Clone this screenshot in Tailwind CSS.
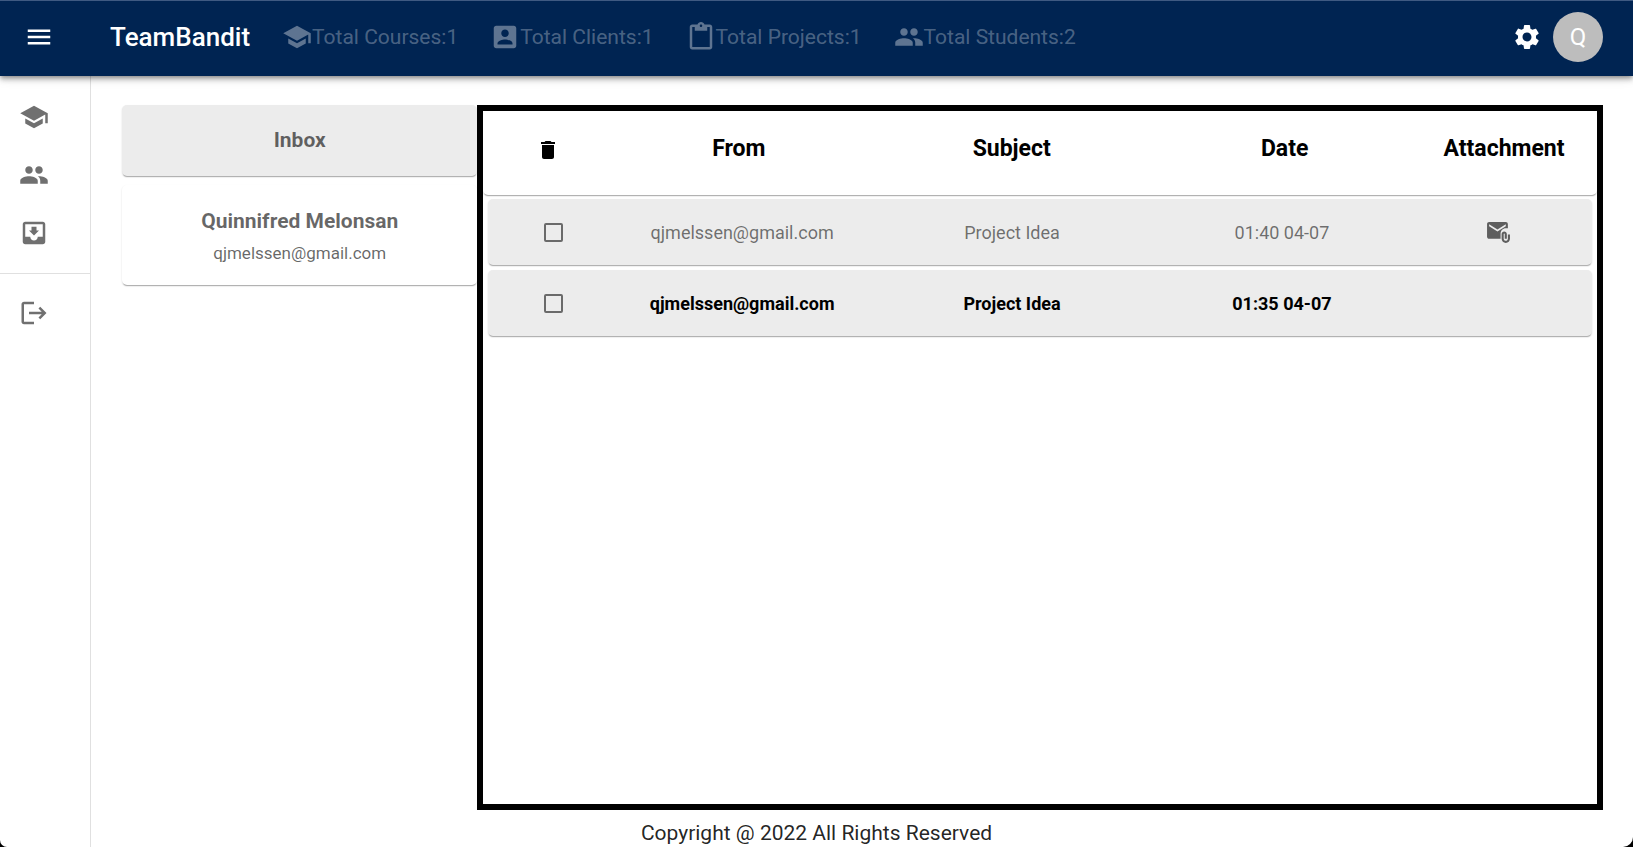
<!DOCTYPE html>
<html lang="en" class="bg-black">
<head>
<meta charset="utf-8">
<meta name="viewport" content="width=device-width, initial-scale=1">
<title>TeamBandit</title>
<script src="https://cdn.jsdelivr.net/npm/@tailwindcss/browser@4"></script>
</head>
<body class="flex min-h-screen flex-col overflow-hidden rounded-br-[10px] rounded-bl-[7px] bg-white font-['Roboto',sans-serif] text-black/87">
<svg class="hidden" aria-hidden="true">
  <symbol id="school" viewBox="0 0 24 24"><path d="M5 13.18v4L12 21l7-3.82v-4L12 17l-7-3.82zM12 3 1 9l11 6 9-4.91V17h2V9L12 3z"/></symbol>
  <symbol id="people" viewBox="0 0 24 24"><path d="M16 11c1.66 0 2.99-1.34 2.99-3S17.66 5 16 5c-1.66 0-3 1.34-3 3s1.34 3 3 3zm-8 0c1.66 0 2.99-1.34 2.99-3S9.66 5 8 5C6.34 5 5 6.34 5 8s1.34 3 3 3zm0 2c-2.33 0-7 1.17-7 3.5V19h14v-2.5c0-2.33-4.67-3.5-7-3.5zm8 0c-.29 0-.62.02-.97.05 1.16.84 1.97 1.97 1.97 3.45V19h6v-2.5c0-2.33-4.67-3.5-7-3.5z"/></symbol>
</svg>

<header class="relative z-10 flex h-[76px] shrink-0 items-center border-t border-[#3f5a82] bg-[#002452] pr-[30px] pb-[3px] pl-[24px] text-white shadow-[0_2px_4px_-1px_rgba(0,0,0,0.3),0_4px_5px_0_rgba(0,0,0,0.18),0_1px_12px_0_rgba(0,0,0,0.14)]">
  <button type="button" aria-label="Open menu" class="mr-[56px]">
    <svg class="size-[30px] fill-current" viewBox="0 0 24 24"><path d="M3 18h18v-2H3v2zm0-5h18v-2H3v2zm0-7v2h18V6H3z"/></svg>
  </button>
  <h1 class="mr-[32px] text-[26px] leading-8 font-medium">TeamBandit</h1>
  <ul class="flex items-center gap-[32px] text-[21px] leading-8 whitespace-nowrap text-white/30">
    <li class="flex items-center"><svg class="size-[30px] fill-white/37"><use href="#school"/></svg>Total Courses:1</li>
    <li class="flex items-center"><svg class="size-[30px] fill-white/37" viewBox="0 0 24 24"><path d="M3 5v14c0 1.1.89 2 2 2h14c1.1 0 2-.9 2-2V5c0-1.1-.9-2-2-2H5c-1.11 0-2 .9-2 2zm12 4c0 1.66-1.34 3-3 3s-3-1.34-3-3 1.34-3 3-3 3 1.34 3 3zm-9 8c0-2 4-3.1 6-3.1s6 1.1 6 3.1v1H6v-1z"/></svg>Total Clients:1</li>
    <li class="flex items-center"><svg class="size-[30px] fill-white/37" viewBox="0 0 24 24"><path d="M19 2h-4.18C14.4.84 13.3 0 12 0c-1.3 0-2.4.84-2.82 2H5c-1.1 0-2 .9-2 2v16c0 1.1.9 2 2 2h14c1.1 0 2-.9 2-2V4c0-1.1-.9-2-2-2zm-7 0c.55 0 1 .45 1 1s-.45 1-1 1-1-.45-1-1 .45-1 1-1zm7 18H5V4h2v3h10V4h2v16z"/></svg>Total Projects:1</li>
    <li class="flex items-center"><svg class="size-[30px] fill-white/37"><use href="#people"/></svg>Total Students:2</li>
  </ul>
  <button type="button" aria-label="Settings" class="mr-[11px] ml-auto">
    <svg class="size-[30px] fill-current" viewBox="0 0 24 24"><path d="M19.14 12.94c.04-.3.06-.61.06-.94 0-.32-.02-.64-.07-.94l2.03-1.58c.18-.14.23-.41.12-.61l-1.92-3.32c-.12-.22-.37-.29-.59-.22l-2.39.96c-.5-.38-1.03-.7-1.62-.94l-.36-2.54c-.04-.24-.24-.41-.48-.41h-3.84c-.24 0-.43.17-.47.41l-.36 2.54c-.59.24-1.13.57-1.62.94l-2.39-.96c-.22-.08-.47 0-.59.22L2.74 8.87c-.12.21-.08.47.12.61l2.03 1.58c-.05.3-.09.63-.09.94s.02.64.07.94l-2.03 1.58c-.18.14-.23.41-.12.61l1.92 3.32c.12.22.37.29.59.22l2.39-.96c.5.38 1.03.7 1.62.94l.36 2.54c.05.24.24.41.48.41h3.84c.24 0 .44-.17.47-.41l.36-2.54c.59-.24 1.13-.56 1.62-.94l2.39.96c.22.08.47 0 .59-.22l1.92-3.32c.12-.22.07-.47-.12-.61l-2.01-1.58zM12 15.6c-1.98 0-3.6-1.62-3.6-3.6s1.62-3.6 3.6-3.6 3.6 1.62 3.6 3.6-1.62 3.6-3.6 3.6z"/></svg>
  </button>
  <button type="button" aria-label="Account" class="size-[50px] rounded-full bg-[#bdbdbd] text-[24px]">Q</button>
</header>

<div class="flex grow">
  <nav aria-label="Main" class="w-[91px] shrink-0 border-r border-[#e0e0e0] text-[#707070]">
    <ul class="flex flex-col gap-[28px] border-b border-[#e0e0e0] pt-[26px] pb-[25px] pl-[19px]">
      <li><a href="#courses" aria-label="Courses" class="block size-[30px]"><svg class="size-[30px] fill-current"><use href="#school"/></svg></a></li>
      <li><a href="#students" aria-label="Students" class="block size-[30px]"><svg class="size-[30px] fill-current"><use href="#people"/></svg></a></li>
      <li><a href="#inbox" aria-label="Inbox" class="block size-[30px]"><svg class="size-[30px] fill-current" viewBox="0 0 24 24"><path d="M19 3H4.99c-1.11 0-1.98.9-1.98 2L3 19c0 1.1.88 2 1.99 2H19c1.1 0 2-.9 2-2V5c0-1.1-.9-2-2-2zm0 12h-4c0 1.66-1.35 3-3 3s-3-1.34-3-3H4.99V5H19v10zm-3-5h-2V7h-4v3H8l4 4 4-4z"/></svg></a></li>
    </ul>
    <a href="#logout" aria-label="Log out" class="mt-[24px] ml-[19px] block size-[30px]"><svg class="size-[30px] fill-current" viewBox="0 0 24 24"><path d="m17 7-1.41 1.41L18.17 11H8v2h10.17l-2.58 2.58L17 17l5-5zM4 5h8V3H4c-1.1 0-2 .9-2 2v14c0 1.1.9 2 2 2h8v-2H4V5z"/></svg></a>
  </nav>

  <div class="flex grow flex-col pt-[29px]">
    <main class="flex grow pr-[30px] pl-[31px]">
      <div class="flex w-[24%] shrink-0 flex-col gap-[9px] text-center text-black/60">
        <button type="button" class="h-[71px] rounded-[5px] bg-[#ececec] text-[21px] font-bold shadow-[0_2px_1px_-1px_rgba(0,0,0,0.25),0_1px_2px_0_rgba(0,0,0,0.14)]">Inbox</button>
        <section class="h-[100px] rounded-[5px] pt-[22px] shadow-[0_2px_1px_-1px_rgba(0,0,0,0.25),0_1px_2px_0_rgba(0,0,0,0.14)]">
          <h2 class="text-[21px] leading-7 font-bold">Quinnifred Melonsan</h2>
          <p class="pt-1 text-[17px] leading-7">qjmelssen@gmail.com</p>
        </section>
      </div>

      <div class="grow border-6 border-black">
        <table class="block text-center">
          <thead class="block">
            <tr class="grid h-[84px] grid-cols-[109fr_273fr_273fr_273fr_166fr] items-center rounded-[5px] px-[10px] pb-[7px] text-[23px] text-black shadow-[0_2px_1px_-1px_rgba(0,0,0,0.25),0_1px_2px_0_rgba(0,0,0,0.14)]">
              <th scope="col"><button type="button" aria-label="Delete selected" class="mx-auto block"><svg class="size-[24px] fill-current" viewBox="0 0 24 24"><path d="M6 19c0 1.1.9 2 2 2h8c1.1 0 2-.9 2-2V7H6v12zM19 4h-3.5l-1-1h-5l-1 1H5v2h14V4z"/></svg></button></th>
              <th scope="col">From</th>
              <th scope="col">Subject</th>
              <th scope="col">Date</th>
              <th scope="col">Attachment</th>
            </tr>
          </thead>
          <tbody class="flex flex-col gap-[5px] px-[5px] pt-[4px] text-[18px]">
            <tr class="grid h-[66px] grid-cols-[109fr_273fr_273fr_273fr_166fr] items-center rounded-[5px] bg-[#ececec] px-[11px] text-black/55 shadow-[0_2px_1px_-1px_rgba(0,0,0,0.25),0_1px_2px_0_rgba(0,0,0,0.14)]">
              <td><input type="checkbox" aria-label="Select message from 01:40 04-07" class="mx-auto block size-[19px] appearance-none rounded-[2px] border-2 border-[#6a6a6a] checked:bg-[#6a6a6a]"></td>
              <td>qjmelssen@gmail.com</td>
              <td>Project Idea</td>
              <td>01:40 04-07</td>
              <td><svg role="img" aria-label="Has attachment" class="mx-auto size-[25px] fill-[#5e5e5e]" viewBox="0 0 24 24"><path d="M21 10V4c0-1.1-.9-2-2-2H3c-1.1 0-1.99.9-1.99 2L1 16c0 1.1.9 2 2 2h11v-5c0-2.76 2.24-5 5-5h2zm-10 1L3 6V4l8 5 8-5v2l-8 5z"/><path d="M21 14v4c0 1.1-.9 2-2 2s-2-.9-2-2v-4.5c0-.28.22-.5.5-.5s.5.22.5.5V18h2v-4.5c0-1.38-1.12-2.5-2.5-2.5S15 12.12 15 13.5V18c0 2.21 1.79 4 4 4s4-1.79 4-4v-4h-2z"/></svg></td>
            </tr>
            <tr class="grid h-[66px] grid-cols-[109fr_273fr_273fr_273fr_166fr] items-center rounded-[5px] bg-[#ececec] px-[11px] font-bold text-black shadow-[0_2px_1px_-1px_rgba(0,0,0,0.25),0_1px_2px_0_rgba(0,0,0,0.14)]">
              <td><input type="checkbox" aria-label="Select message from 01:35 04-07" class="mx-auto block size-[19px] appearance-none rounded-[2px] border-2 border-[#6a6a6a] checked:bg-[#6a6a6a]"></td>
              <td>qjmelssen@gmail.com</td>
              <td>Project Idea</td>
              <td>01:35 04-07</td>
              <td></td>
            </tr>
          </tbody>
        </table>
      </div>
    </main>
    <footer class="h-[37px] shrink-0 pt-[9px] pr-[91px] text-center text-[21px] leading-7">Copyright @ 2022 All Rights Reserved</footer>
  </div>
</div>
</body>
</html>
